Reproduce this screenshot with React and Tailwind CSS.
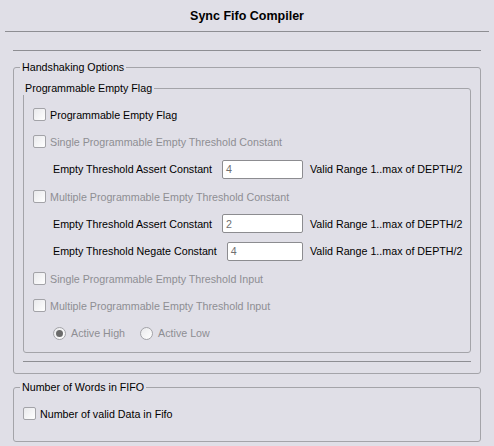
import React from 'react';

const Check = ({ className = '' }) => (
  <span className={`block w-[13px] h-[13px] shrink-0 rounded-[2px] border border-[#a3a3a8] bg-gradient-to-br from-[#e9e9ec] to-white ${className}`} />
);

const Radio = ({ checked }) => (
  <span className="flex w-[13px] h-[13px] shrink-0 items-center justify-center rounded-full border border-[#a3a3a8] bg-gradient-to-br from-[#e9e9ec] to-white">
    {checked && <span className="block w-[7px] h-[7px] rounded-full bg-[#6b6b6b]" />}
  </span>
);

function CheckRow({ label, disabled, h = 'h-[27px]', pl = 'pl-[9px]' }) {
  return (
    <div className={`flex items-center ${h} ${pl}`}>
      <Check />
      <span className={`ml-[4px] ${disabled ? 'text-[#8e8e93]' : 'text-black'}`}>{label}</span>
    </div>
  );
}

function InputRow({ label, value, h = 'h-[27px]' }) {
  return (
    <div className={`flex items-center ${h} pl-[29px]`}>
      <div className="flex items-center w-[250px]">
        <span className="whitespace-nowrap">{label}</span>
        <div className="ml-[10px] flex-1 h-[19px] rounded-[2px] border border-[#8c8c90] bg-white pl-[3px] flex items-center text-[#707070]">
          {value}
        </div>
      </div>
      <span className="ml-[7px] whitespace-nowrap">Valid Range 1..max of DEPTH/2</span>
    </div>
  );
}

export default function App() {
  return (
    <div
      className="w-[494px] h-[446px] bg-[#e0dfe7] text-[10.7px] leading-[14px] text-black overflow-hidden"
      style={{ fontFamily: '"Liberation Sans", Arial, sans-serif' }}
    >
      <div className="h-[31px] flex items-center justify-center font-bold text-[12.5px]">
        Sync Fifo Compiler
      </div>
      <div className="mx-[5px] border-t border-[#8e8e93]" />
      <div className="mx-[13px] mt-[18px] border-t border-[#8e8e93]" />

      <fieldset className="mx-[13px] mt-[9px] rounded-[3px] border border-[#a4a4a9]">
        <legend className="ml-[6px] px-[2px]">Handshaking Options</legend>

        <fieldset className="mx-[9px] mt-[7px] rounded-[3px] border border-[#a4a4a9] pt-[6px] pb-[5px]">
          <legend className="ml-[-1px] px-[2px]">Programmable Empty Flag</legend>
          <CheckRow label="Programmable Empty Flag" />
          <CheckRow label="Single Programmable Empty Threshold Constant" disabled />
          <InputRow label="Empty Threshold Assert Constant" value="4" h="h-[28px]" />
          <CheckRow label="Multiple Programmable Empty Threshold Constant" disabled />
          <InputRow label="Empty Threshold Assert Constant" value="2" />
          <InputRow label="Empty Threshold Negate Constant" value="4" h="h-[28px]" />
          <CheckRow label="Single Programmable Empty Threshold Input" disabled />
          <CheckRow label="Multiple Programmable Empty Threshold Input" disabled />
          <div className="flex items-center h-[28px] pl-[29px] text-[#8e8e93]">
            <Radio checked />
            <span className="ml-[5px]">Active High</span>
            <span className="ml-[15px]"><Radio /></span>
            <span className="ml-[5px]">Active Low</span>
          </div>
        </fieldset>

        <div className="mx-[9px] mt-[8px] mb-[11px] border-t border-[#8e8e93]" />
      </fieldset>

      <fieldset className="mx-[13px] mt-[6px] rounded-[3px] border border-[#a4a4a9] pt-[6px] pb-[14px]">
        <legend className="ml-[6px] px-[2px]">Number of Words in FIFO</legend>
        <CheckRow label="Number of valid Data in Fifo" />
      </fieldset>
    </div>
  );
}
